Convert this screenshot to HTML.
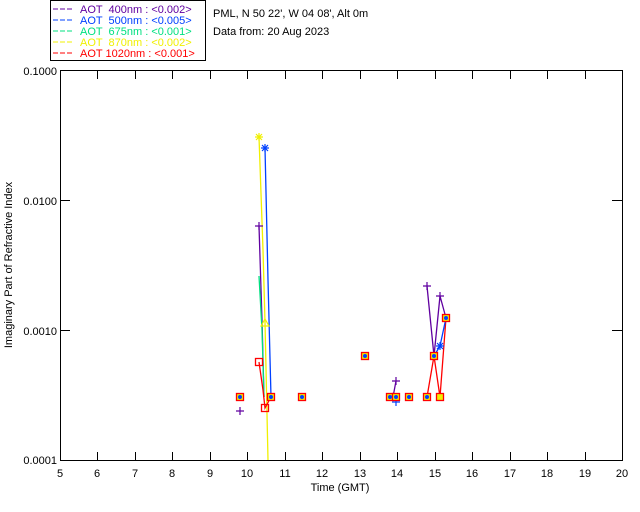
<!DOCTYPE html><html><head><style>body{margin:0;background:#fff}svg{display:block}text{font-family:"Liberation Sans",sans-serif;font-size:11px}</style></head><body>
<svg width="640" height="512" xmlns="http://www.w3.org/2000/svg">
<rect x="50.5" y="0.5" width="155" height="60" fill="none" stroke="#000"/>
<g font-size="11">
<line x1="53" y1="9" x2="73" y2="9" stroke="#6000a0" stroke-dasharray="5,2"/><text x="80" y="13" fill="#6000a0" xml:space="preserve">AOT  400nm : &lt;0.002&gt;</text>
<line x1="53" y1="20" x2="73" y2="20" stroke="#0040ff" stroke-dasharray="5,2"/><text x="80" y="24" fill="#0040ff" xml:space="preserve">AOT  500nm : &lt;0.005&gt;</text>
<line x1="53" y1="31" x2="73" y2="31" stroke="#00e080" stroke-dasharray="5,2"/><text x="80" y="35" fill="#00e080" xml:space="preserve">AOT  675nm : &lt;0.001&gt;</text>
<line x1="53" y1="42" x2="73" y2="42" stroke="#f0f000" stroke-dasharray="5,2"/><text x="80" y="46" fill="#f0f000" xml:space="preserve">AOT  870nm : &lt;0.002&gt;</text>
<line x1="53" y1="53" x2="73" y2="53" stroke="#ff0000" stroke-dasharray="5,2"/><text x="80" y="57" fill="#ff0000" xml:space="preserve">AOT 1020nm : &lt;0.001&gt;</text>
</g>
<text x="213" y="17">PML, N 50 22', W 04 08', Alt 0m</text>
<text x="213" y="35">Data from: 20 Aug 2023</text>
<rect x="60.5" y="70.5" width="562" height="390" fill="none" stroke="#000"/>
<g stroke="#000">
<line x1="60" y1="200.5" x2="70" y2="200.5"/><line x1="60" y1="330.5" x2="70" y2="330.5"/>
<line x1="612" y1="200.5" x2="622" y2="200.5"/><line x1="612" y1="330.5" x2="622" y2="330.5"/>
<path d="M97.5 460v-8M135.5 460v-8M172.5 460v-8M210.5 460v-8M247.5 460v-8M285.5 460v-8M322.5 460v-8M360.5 460v-8M397.5 460v-8M435.5 460v-8M472.5 460v-8M510.5 460v-8M547.5 460v-8M585.5 460v-8"/>
<path d="M97.5 71v8M135.5 71v8M172.5 71v8M210.5 71v8M247.5 71v8M285.5 71v8M322.5 71v8M360.5 71v8M397.5 71v8M435.5 71v8M472.5 71v8M510.5 71v8M547.5 71v8M585.5 71v8"/>
</g>
<g text-anchor="end"><text x="57" y="75">0.1000</text><text x="57" y="205">0.0100</text><text x="57" y="335">0.0010</text><text x="57" y="464">0.0001</text></g>
<g text-anchor="middle"><text x="60" y="477">5</text><text x="97" y="477">6</text><text x="135" y="477">7</text><text x="172" y="477">8</text><text x="210" y="477">9</text><text x="247" y="477">10</text><text x="285" y="477">11</text><text x="322" y="477">12</text><text x="360" y="477">13</text><text x="397" y="477">14</text><text x="435" y="477">15</text><text x="472" y="477">16</text><text x="510" y="477">17</text><text x="547" y="477">18</text><text x="585" y="477">19</text><text x="622" y="477">20</text>
<text x="340" y="491">Time (GMT)</text>
<text transform="translate(12,265) rotate(-90)">Imaginary Part of Refractive Index</text></g>
<g fill="none" stroke-width="1.3">
<polyline points="259,137 263,250 265,322 268,460" stroke="#f0f000"/>
<polyline points="265,148 268,280 271,397" stroke="#0040ff"/>
<polyline points="259,226 262,320 264,397" stroke="#6000a0"/>
<polyline points="259,276 262,330 264,397" stroke="#00e080"/>
<polyline points="259,362 263,390 265,408 271,397" stroke="#ff0000"/>
<polyline points="396,381 393,397" stroke="#6000a0"/>
<polyline points="427,286 434,356 440,296 446,318" stroke="#6000a0"/>
<polyline points="427,397 434,356 440,397 446,318" stroke="#ff0000"/>
<polyline points="434,356 440,346 446,318" stroke="#0040ff"/>
</g>
<g stroke="#6000a0" stroke-width="1.2"><path d="M236 411h8M240 407v8M255 226h8M259 222v8M392 381h8M396 377v8M423 286h8M427 282v8M436 296h8M440 292v8"/></g>
<g stroke="#0040ff" stroke-width="1.2"><path d="M261 148h8M265 144v8M262 145l6 6M268 145l-6 6M392 402h8M396 398v8M436 346h8M440 342v8M437 343l6 6M443 343l-6 6"/></g>
<g stroke="#f0f000" stroke-width="1.2"><path d="M255 137h8M259 133v8M256 134l6 6M262 134l-6 6"/><path d="M261 326l4-7 4 7z" fill="none"/></g>
<g id="sq" stroke="#ff0000" fill="#f0f000" stroke-width="1.3">
<rect x="236.5" y="393.5" width="7" height="7"/><rect x="298.5" y="393.5" width="7" height="7"/><rect x="361.5" y="352.5" width="7" height="7"/><rect x="386.5" y="393.5" width="7" height="7"/><rect x="392.5" y="393.5" width="7" height="7"/><rect x="405.5" y="393.5" width="7" height="7"/><rect x="423.5" y="393.5" width="7" height="7"/><rect x="430.5" y="352.5" width="7" height="7"/><rect x="436.5" y="393.5" width="7" height="7"/><rect x="442.5" y="314.5" width="7" height="7"/><rect x="267.5" y="393.5" width="7" height="7"/>
</g>
<g fill="#0040ff"><circle cx="240" cy="397" r="2"/><circle cx="302" cy="397" r="2"/><circle cx="365" cy="356" r="2"/><circle cx="390" cy="397" r="2"/><circle cx="396" cy="397" r="2"/><circle cx="409" cy="397" r="2"/><circle cx="427" cy="397" r="2"/><circle cx="434" cy="356" r="2"/><circle cx="446" cy="318" r="2"/><circle cx="271" cy="397" r="2"/></g>
<g stroke="#ff0000" fill="none" stroke-width="1.3"><rect x="255.5" y="358.5" width="7" height="7"/><rect x="261.5" y="404.5" width="7" height="7"/></g>
</svg></body></html>
